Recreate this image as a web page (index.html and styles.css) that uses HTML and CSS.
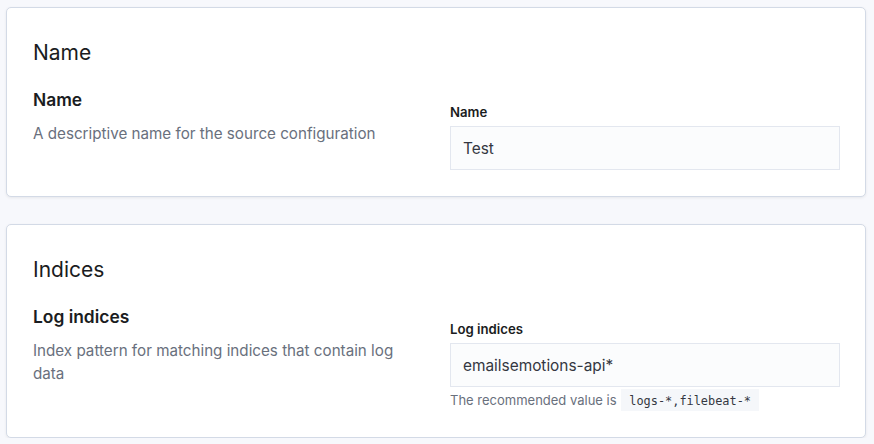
FILE: index.html
```html
<!DOCTYPE html>
<html lang="en">
<head>
<meta charset="utf-8">
<title>Source configuration</title>
<link rel="stylesheet" href="styles.css">
</head>
<body>
<div class="page">
  <section class="panel">
    <h2 class="panel-title">Name</h2>
    <div class="row">
      <div class="desc">
        <h3 class="row-title">Name</h3>
        <p class="row-text">A descriptive name for the source configuration</p>
      </div>
      <div class="fields">
        <label class="label" for="name">Name</label>
        <input class="input" id="name" type="text" value="Test">
      </div>
    </div>
  </section>
  <section class="panel">
    <h2 class="panel-title">Indices</h2>
    <div class="row">
      <div class="desc">
        <h3 class="row-title">Log indices</h3>
        <p class="row-text">Index pattern for matching indices that contain log data</p>
      </div>
      <div class="fields">
        <label class="label" for="logs">Log indices</label>
        <input class="input" id="logs" type="text" value="emailsemotions-api*">
        <div class="help">The recommended value is <code class="code">logs-*,filebeat-*</code></div>
      </div>
    </div>
  </section>
</div>
</body>
</html>
```
FILE: styles.css
```css
html, body {
  margin: 0;
  padding: 0;
  background: #f7f8fc;
}
body {
  font-family: Inter, "Noto Sans", sans-serif;
  color: #1a1c21;
}
.page {
  display: flex;
  flex-direction: column;
  gap: 27px;
  padding: 7px 8px 0 6px;
}
.panel {
  box-sizing: border-box;
  width: 860px;
  background: #ffffff;
  border: 1px solid #d3dae6;
  border-radius: 5px;
  box-shadow: 0 1px 3px rgba(0, 0, 0, 0.07);
  padding: 26px 25px 26px 26px;
}
.panel-title {
  margin: 6px 0 0 0;
  font-size: 21px;
  line-height: 26px;
  font-weight: 400;
  color: #1a1c21;
}
.row {
  display: grid;
  grid-template-columns: 1fr 1fr;
  column-gap: 27px;
  margin-top: 23px;
}
.row-title {
  margin: 0;
  font-size: 17.4px;
  line-height: 22px;
  font-weight: 600;
  color: #1a1c21;
}
.row-text {
  margin: 11px 0 0 0;
  font-size: 15.2px;
  line-height: 23px;
  color: #69707d;
}
.fields {
  display: flex;
  flex-direction: column;
  padding-top: 14px;
}
.label {
  font-size: 13.2px;
  line-height: 18px;
  font-weight: 600;
  color: #1a1c21;
  margin-bottom: 5px;
}
.input {
  box-sizing: border-box;
  height: 44px;
  width: 100%;
  margin: 0;
  padding: 0 12px;
  border: 1px solid #e3e7ef;
  border-radius: 0;
  background: #fbfcfd;
  font-family: Inter, "Noto Sans", sans-serif;
  font-size: 15.4px;
  color: #343741;
  outline: none;
}
.help {
  padding-top: 3px;
  font-size: 13px;
  line-height: 20px;
  color: #69707d;
}
.code {
  font-family: "DejaVu Sans Mono", "Liberation Mono", monospace;
  font-size: 11.9px;
  color: #343741;
  background: #f5f7fa;
  padding: 5px 8px 3px 8px;
  margin-left: 1px;
}
```
